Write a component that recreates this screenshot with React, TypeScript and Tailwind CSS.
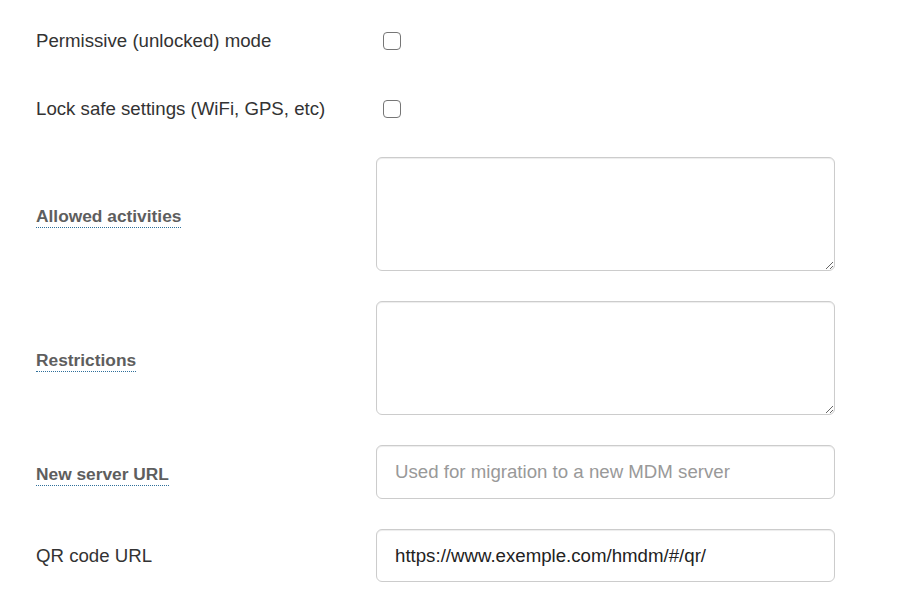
import React from 'react';

const font = { fontFamily: '"Liberation Sans", Arial, Helvetica, sans-serif' };

const fieldCls =
  'w-[459px] rounded-[6px] border border-[#cccccc] px-[18px] text-[#222] outline-none shadow-[inset_0_1px_1px_rgba(0,0,0,0.075)]';

// Label with a tooltip-style dotted underline (bold, muted)
function HintLabel({ children }: { children: React.ReactNode }) {
  return (
    <span className="text-[17.33px] font-bold text-[#5e5e5e] border-b border-dotted border-[#2f6f9a] leading-[20px] pb-[1px]">
      {children}
    </span>
  );
}

function CheckRow({ label, className = '' }: { label: string; className?: string }) {
  return (
    <div className={`flex items-center h-[54px] ${className}`}>
      <div className="w-[340px] shrink-0 text-[#333]">{label}</div>
      <input
        type="checkbox"
        className="ml-[7px] appearance-none w-[18px] h-[18px] rounded-[4px] border-[1.5px] border-[#767676] bg-white"
      />
    </div>
  );
}

export default function App() {
  return (
    <div className="min-h-[608px] bg-white pl-[36px] pt-[14px] text-[18.67px]" style={font}>
      {/* Toggles */}
      <CheckRow label="Permissive (unlocked) mode" />
      <CheckRow label="Lock safe settings (WiFi, GPS, etc)" className="mt-[14px]" />

      {/* Textareas */}
      <div className="flex items-center mt-[21px]">
        <div className="w-[340px] shrink-0 pt-[3px]">
          <HintLabel>Allowed activities</HintLabel>
        </div>
        <textarea className={`${fieldCls} h-[114px] py-[10px]`} />
      </div>

      <div className="flex items-center mt-[30px]">
        <div className="w-[340px] shrink-0 pt-[3px]">
          <HintLabel>Restrictions</HintLabel>
        </div>
        <textarea className={`${fieldCls} h-[114px] py-[10px]`} />
      </div>

      {/* URLs */}
      <div className="flex items-center mt-[30px]">
        <div className="w-[340px] shrink-0 pt-[3px]">
          <HintLabel>New server URL</HintLabel>
        </div>
        <input
          type="text"
          placeholder="Used for migration to a new MDM server"
          className={`${fieldCls} h-[54px] placeholder:text-[#999]`}
        />
      </div>

      <div className="flex items-center mt-[30px]">
        <div className="w-[340px] shrink-0 text-[#333]">QR code URL</div>
        <input
          type="text"
          defaultValue="https://www.exemple.com/hmdm/#/qr/"
          className={`${fieldCls} h-[53px]`}
        />
      </div>
    </div>
  );
}
